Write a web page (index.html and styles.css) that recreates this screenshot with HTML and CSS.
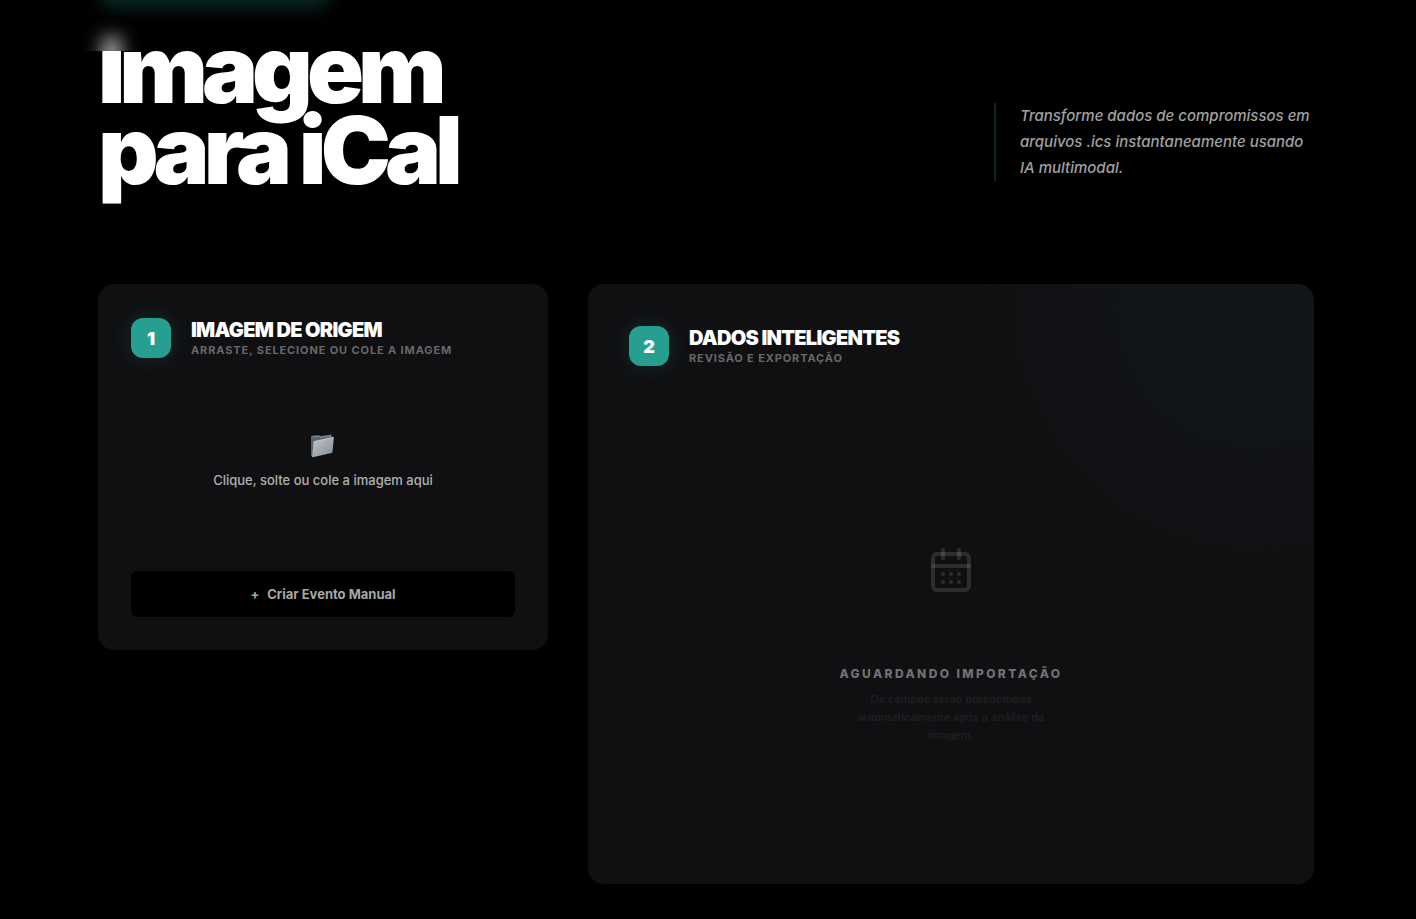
FILE: index.html
```html
<!DOCTYPE html>
<html lang="pt-BR">
<head>
<meta charset="utf-8">
<meta name="viewport" content="width=device-width, initial-scale=1">
<title>Imagem para iCal</title>
<link rel="stylesheet" href="styles.css">
</head>
<body>
<header class="topbar"></header>
<main class="page">
  <section class="hero">
    <h1 class="hero-title">Imagem<br>para iCal</h1>
    <p class="hero-text">Transforme dados de compromissos em arquivos .ics instantaneamente usando IA multimodal.</p>
  </section>
  <div class="panels">
    <section class="card card-source">
      <div class="card-head">
        <span class="step">1</span>
        <div>
          <h2 class="card-title">Imagem de Origem</h2>
          <p class="card-sub">Arraste, selecione ou cole a imagem</p>
        </div>
      </div>
      <button type="button" class="dropzone">
        <svg class="folder" width="26" height="26" viewBox="0 0 26 26" aria-hidden="true">
          <defs>
            <linearGradient id="front" x1="0" y1="0" x2="1" y2="1">
              <stop offset="0" stop-color="#c3c8cf"/><stop offset="1" stop-color="#858b94"/>
            </linearGradient>
          </defs>
          <path d="M1 3.400 1.700 2.800l7-.8 1.200 1L21 1.600l.8.700v3L3.500 24 1 23z" fill="#596570"/>
          <path d="M1.800 4 9 3l1 1.200 11-1.200" fill="none" stroke="#8b98a4" stroke-width=".8"/>
          <path d="M4.300 8.300 23.300 4Q24 4 23.900 4.800L22.400 18.900Q22.200 19.700 21.400 19.900L3 24.200Q2 24.300 2.200 23.400L3.600 9.100Q3.700 8.400 4.300 8.300Z" fill="url(#front)"/>
          <path d="M3.900 8.600 23.500 4.400" fill="none" stroke="#d0d6dc" stroke-width=".6"/>
        </svg>
        <span>Clique, solte ou cole a imagem aqui</span>
      </button>
      <button type="button" class="manual"><span>+</span><span>Criar Evento Manual</span></button>
    </section>
    <section class="card card-data">
      <div class="card-head">
        <span class="step">2</span>
        <div>
          <h2 class="card-title">Dados Inteligentes</h2>
          <p class="card-sub">Revisão e exportação</p>
        </div>
      </div>
      <div class="empty">
        <div class="empty-icon">
          <svg width="48" height="48" viewBox="0 0 24 24" fill="none" stroke="rgba(255,255,255,.12)" stroke-width="2" stroke-linecap="round" stroke-linejoin="round" aria-hidden="true">
            <rect x="3" y="4" width="18" height="18" rx="2"/>
            <path d="M16 2v4"/><path d="M8 2v4"/><path d="M3 10h18"/>
            <path d="M8 14h.01"/><path d="M12 14h.01"/><path d="M16 14h.01"/>
            <path d="M8 18h.01"/><path d="M12 18h.01"/><path d="M16 18h.01"/>
          </svg>
        </div>
        <h3 class="empty-title">Aguardando importação</h3>
        <p class="empty-text">Os campos serão preenchidos automaticamente após a análise da imagem.</p>
      </div>
    </section>
  </div>
</main>
</body>
</html>
```
FILE: styles.css
```css
* { box-sizing: border-box; }
body {
  margin: 0;
  background: #000;
  color: #fff;
  font-family: Inter, "Liberation Sans", sans-serif;
}
h1, h2, h3, p { margin: 0; }
button { font: inherit; border: 0; cursor: pointer; }

.topbar {
  position: fixed;
  inset: 0 0 auto;
  height: 51px;
  z-index: 10;
  overflow: hidden;
  background: #000;
}
.topbar::before,
.topbar::after {
  content: "";
  position: absolute;
  filter: blur(9px);
}
.topbar::before {
  left: 102px;
  top: -32px;
  width: 226px;
  height: 38px;
  background: #0b2f2a;
}
.topbar::after {
  left: 102px;
  top: 37px;
  width: 19px;
  height: 50px;
  background: rgba(255, 255, 255, .68);
}

.page { padding: 29px 102px 35px 98px; }

.hero {
  display: flex;
  justify-content: space-between;
  align-items: flex-end;
  gap: 40px;
}
.hero-title {
  font-size: 94px;
  font-weight: 900;
  line-height: 81px;
  letter-spacing: -6px;
}
.hero-text {
  width: 320px;
  margin-bottom: 10px;
  padding-left: 24px;
  border-left: 2px solid #0b2723;
  color: #a1a1a1;
  font-size: 15px;
  font-weight: 500;
  line-height: 26px;
  font-style: italic;
}

.panels {
  display: grid;
  grid-template-columns: minmax(0, 450px) minmax(0, 1fr);
  gap: 40px;
  align-items: start;
  margin-top: 93px;
}
.card {
  display: flex;
  flex-direction: column;
  border-radius: 16px;
  background: #101012;
}
.card-source { padding: 34px 33px 33px; }
.card-data {
  min-height: 600px;
  padding: 42px 41px 41px;
  background: radial-gradient(circle at 92% 4%, #111719 0, #111517 110px, #111215 190px, #101012 290px);
}
.card-head {
  display: flex;
  align-items: center;
  gap: 20px;
}
.step {
  display: grid;
  place-items: center;
  width: 40px;
  height: 40px;
  border-radius: 12px;
  background: #269e90;
  box-shadow: 0 0 20px rgba(42, 157, 143, .2);
  font-size: 18px;
  font-weight: 900;
}
.card-title {
  font-size: 20px;
  line-height: 24px;
  font-weight: 900;
  letter-spacing: -0.035em;
  text-transform: uppercase;
}
.card-sub {
  color: #68686a;
  font-size: 11px;
  line-height: 16px;
  font-weight: 700;
  letter-spacing: 0.08em;
  text-transform: uppercase;
}

.dropzone {
  display: flex;
  flex-direction: column;
  align-items: center;
  gap: 9px;
  margin: 32px 0;
  padding: 43px 0 47px;
  background: none;
  color: #b0b0b0;
  font-size: 13px;
  font-weight: 500;
  line-height: 24px;
}
.manual {
  display: flex;
  justify-content: center;
  align-items: center;
  gap: 8px;
  height: 46px;
  border-radius: 6px;
  background: #000;
  color: #a8a8a8;
  font-size: 13px;
  font-weight: 700;
}

.empty {
  flex: 1;
  display: flex;
  flex-direction: column;
  align-items: center;
  justify-content: center;
  margin-top: 40px;
  text-align: center;
}
.empty-icon {
  display: grid;
  place-items: center;
  width: 128px;
  height: 128px;
  margin-bottom: 32px;
  border-radius: 50%;
}
.empty-title {
  color: #727274;
  font-size: 12px;
  line-height: 16px;
  font-weight: 800;
  letter-spacing: 0.2em;
  text-transform: uppercase;
}
.empty-text {
  max-width: 200px;
  margin-top: 8px;
  color: #1f1f21;
  font-size: 11px;
  line-height: 18px;
  font-weight: 600;
}
```
